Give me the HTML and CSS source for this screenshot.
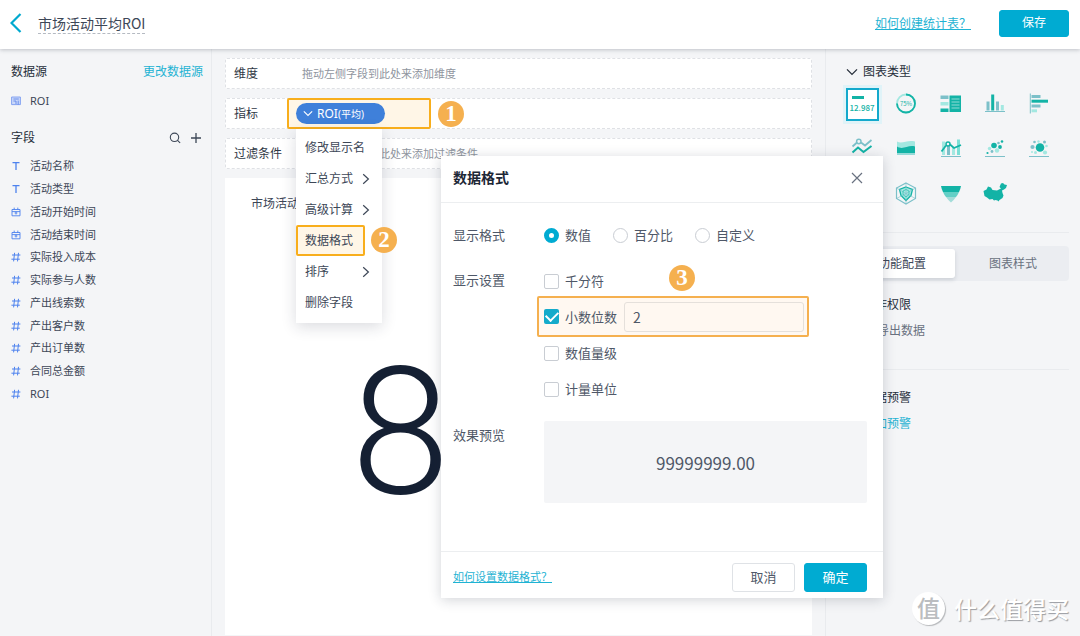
FILE: index.html
```html
<!DOCTYPE html>
<html lang="zh-CN">
<head>
<meta charset="utf-8">
<title>市场活动平均ROI</title>
<link rel="stylesheet" href="styles.css">
</head>
<body>
<svg class="defs" aria-hidden="true">
  <symbol id="i-text" viewBox="0 0 10 10"><path d="M1.5 1.7h7M5 1.7V9" fill="none" stroke="currentColor" stroke-width="1.3"/></symbol>
  <symbol id="i-date" viewBox="0 0 10 10"><path d="M1 2.500h8v6.300H1zM1 4.600h8M3.200 .6v2M6.800 .6v2M5 4.600v2.900M3.600 6h2.800" fill="none" stroke="currentColor" stroke-width=".9"/></symbol>
  <symbol id="i-num" viewBox="0 0 10 10"><path d="M1 3h8.400M.4 7.200h8.400M3.600 .8 2.600 9.400M7.500 .8 6.500 9.400" fill="none" stroke="currentColor" stroke-width="1"/></symbol>
  <symbol id="i-right" viewBox="0 0 8 12"><path d="M1.200 1.200 6.400 6 1.200 10.800" fill="none" stroke="currentColor" stroke-width="1.200"/></symbol>
  <symbol id="i-down" viewBox="0 0 12 8"><path d="M1 1.400 6 6.400l5-5" fill="none" stroke="currentColor" stroke-width="1.300"/></symbol>
</svg>

<header class="topbar">
  <button class="back" aria-label="返回"><svg width="12" height="20" viewBox="0 0 12 20"><path d="M10.500 1 1.500 10l9 9" fill="none" stroke="#00a9cf" stroke-width="2.200"/></svg></button>
  <h1 class="title">市场活动平均ROI</h1>
  <a class="help" href="#">如何创建统计表？</a>
  <button class="btn btn-primary save">保存</button>
</header>

<div class="workspace">
  <aside class="sidebar">
    <div class="side-head"><h2>数据源</h2><a href="#">更改数据源</a></div>
    <div class="field source"><svg class="ico" viewBox="0 0 10 10"><path d="M.6 1h8.800v7.600H.6z" fill="#cbd9fa" stroke="#7b9cf0" stroke-width=".9"/><path d="M2.400 3h5.400M2.400 5h2.600v3M7.200 4.600v4" fill="none" stroke="#5d84ea" stroke-width=".9"/></svg>ROI</div>
    <div class="side-head fields-head"><h2>字段</h2>
      <span class="tools">
        <button aria-label="搜索"><svg width="12" height="12" viewBox="0 0 12 12"><circle cx="5.500" cy="5.300" r="4.200" fill="none" stroke="#3d4757" stroke-width="1.100"/><path d="m8.500 8.300 2.600 2.500" stroke="#3d4757" stroke-width="1.100"/></svg></button>
        <button aria-label="添加"><svg width="12" height="12" viewBox="0 0 12 12"><path d="M6 1v10M1 6h10" stroke="#3d4757" stroke-width="1.300"/></svg></button>
      </span>
    </div>
    <ul class="fields">
      <li class="field"><svg class="ico"><use href="#i-text"/></svg>活动名称</li>
      <li class="field"><svg class="ico"><use href="#i-text"/></svg>活动类型</li>
      <li class="field"><svg class="ico"><use href="#i-date"/></svg>活动开始时间</li>
      <li class="field"><svg class="ico"><use href="#i-date"/></svg>活动结束时间</li>
      <li class="field"><svg class="ico"><use href="#i-num"/></svg>实际投入成本</li>
      <li class="field"><svg class="ico"><use href="#i-num"/></svg>实际参与人数</li>
      <li class="field"><svg class="ico"><use href="#i-num"/></svg>产出线索数</li>
      <li class="field"><svg class="ico"><use href="#i-num"/></svg>产出客户数</li>
      <li class="field"><svg class="ico"><use href="#i-num"/></svg>产出订单数</li>
      <li class="field"><svg class="ico"><use href="#i-num"/></svg>合同总金额</li>
      <li class="field"><svg class="ico"><use href="#i-num"/></svg>ROI</li>
    </ul>
  </aside>

  <main class="canvas">
    <div class="shelf"><span class="shelf-name">维度</span><span class="hint">拖动左侧字段到此处来添加维度</span></div>
    <div class="shelf metric"><span class="shelf-name">指标</span>
      <div class="metric-box">
        <button class="pill"><svg width="10" height="7"><use href="#i-down"/></svg>ROI<small>(平均)</small></button>
        <ul class="menu">
          <li><button>修改显示名</button></li>
          <li><button>汇总方式<svg width="8" height="12"><use href="#i-right"/></svg></button></li>
          <li><button>高级计算<svg width="8" height="12"><use href="#i-right"/></svg></button></li>
          <li class="marked"><button>数据格式</button><span class="badge">2</span></li>
          <li><button>排序<svg width="8" height="12"><use href="#i-right"/></svg></button></li>
          <li><button>删除字段</button></li>
        </ul>
      </div>
      <span class="badge">1</span>
    </div>
    <div class="shelf"><span class="shelf-name">过滤条件</span><span class="hint">拖动左侧字段到此处来添加过滤条件</span></div>
    <section class="chart">
      <h2>市场活动平均ROI</h2>
      <div class="figure">8</div>
    </section>
  </main>

  <aside class="config">
    <h2 class="config-head"><svg width="12" height="8"><use href="#i-down"/></svg>图表类型</h2>
    <div class="types">
      <button class="type active" aria-label="指标卡"><svg viewBox="0 0 33 33"><path d="M6 8h12v3H6z" fill="#13b3a6"/><text x="16" y="23" text-anchor="middle" class="card-num">12.987</text></svg></button>
      <button class="type" aria-label="仪表"><svg viewBox="0 0 33 33"><circle cx="16" cy="15.500" r="9" fill="none" stroke="#a3e8e1" stroke-width="1.800"/><path d="M16 6.500a9 9 0 1 1-9 9" fill="none" stroke="#13b3a6" stroke-width="1.800"/><text x="16" y="18" text-anchor="middle" class="ring-num">75%</text></svg></button>
      <button class="type" aria-label="表格"><svg viewBox="0 0 33 33"><path d="M5.500 7.500h8V11h-8z" fill="#7cc0c9"/><path d="M5.500 14h8v3.500h-8z" fill="#a3e8e1"/><path d="M5.500 20.500h8V24h-8zM14.500 7.500H26V24H14.500z" fill="#13b3a6"/><path d="M16.500 11h8M16.500 14h8M16.500 17h8M16.500 20h8" stroke="#8fdcd5" stroke-width="1.200"/></svg></button>
      <button class="type" aria-label="柱状图"><svg viewBox="0 0 33 33"><path d="M7.500 13.500h3v9h-3zM17 13.500h3v9h-3z" fill="#7cc0c9"/><path d="M12.200 6.500h3v16h-3z" fill="#13b3a6"/><path d="M21.800 17h3v5.500h-3z" fill="#a3e8e1"/><path d="M6 23.500h20" stroke="#7cc0c9"/></svg></button>
      <button class="type" aria-label="条形图"><svg viewBox="0 0 33 33"><path d="M7.300 5.500v20" stroke="#7cc0c9"/><path d="M8.500 7h9v3h-9zM8.500 16.500h9v3h-9z" fill="#7cc0c9"/><path d="M8.500 11.700H25v3H8.500z" fill="#13b3a6"/><path d="M8.500 21.300H14v3H8.500z" fill="#a3e8e1"/></svg></button>
      <button class="type" aria-label="折线图"><svg viewBox="0 0 33 33"><path d="m6.500 13.500 4.500-4M15 9.500l4 3L25.500 7" fill="none" stroke="#7cc0c9" stroke-width="1.800"/><circle cx="12.800" cy="8.500" r="2.200" fill="none" stroke="#7cc0c9" stroke-width="1.500"/><path d="m6.500 19.500 5.500-5 5.500 4.500 8-6" fill="none" stroke="#13b3a6" stroke-width="2"/><path d="M6 23.500h20" stroke="#7cc0c9"/></svg></button>
      <button class="type" aria-label="面积图"><svg viewBox="0 0 33 33"><path d="M7 8.500c5 3 10-2 18 0V22H7z" fill="#a3e8e1"/><path d="M7 13.500c6 4 11-2 18 0V20H7z" fill="#13b3a6"/><path d="M7 21h18" stroke="#7cc0c9" stroke-width=".7"/></svg></button>
      <button class="type" aria-label="组合图"><svg viewBox="0 0 33 33"><path d="M7 8.500h3V22H7zM12 14h3v8h-3zM17 14h3v8h-3z" fill="#a3e8e1"/><path d="M22 6.500h3V22h-3z" fill="#7ddfd6"/><path d="M12 13h3v9h-3z" fill="#7cc0c9"/><path d="m6.500 18.500 4.500-6M15 11.500l4 3.500 7-3" fill="none" stroke="#13b3a6" stroke-width="1.800"/><circle cx="13" cy="11" r="2" fill="none" stroke="#13b3a6" stroke-width="1.500"/><path d="M6 23.500h20" stroke="#7cc0c9"/></svg></button>
      <button class="type" aria-label="散点图"><svg viewBox="0 0 33 33"><g fill="#13b3a6"><circle cx="15" cy="12.500" r="2.800"/><circle cx="21" cy="14" r="1.900"/><circle cx="23" cy="8.500" r="1.300"/><circle cx="8.500" cy="20" r="1.100"/></g><g fill="#a3e8e1"><circle cx="18" cy="17.500" r="2.200"/><circle cx="10.500" cy="15.500" r="1.700"/></g><g fill="#7cc0c9"><circle cx="19.500" cy="10" r="1.300"/><circle cx="13" cy="18.500" r="1.400"/></g><path d="M6 23.500h20" stroke="#7cc0c9"/></svg></button>
      <button class="type" aria-label="气泡图"><svg viewBox="0 0 33 33"><circle cx="17" cy="14.500" r="4.300" fill="#13b3a6"/><g fill="#a3e8e1"><circle cx="15.500" cy="8.500" r="1.200"/><circle cx="12.500" cy="19.500" r="1.500"/><circle cx="9" cy="19" r="1"/><circle cx="22" cy="19.500" r="2.100"/><circle cx="23.500" cy="13" r="1.300"/></g><g fill="#7cc0c9"><circle cx="9.500" cy="14" r="2.100"/><circle cx="11.500" cy="9" r="1.300"/><circle cx="21.500" cy="9" r="1.500"/></g><path d="M6 23.500h20" stroke="#7cc0c9"/></svg></button>
      <button class="type" aria-label="饼图"><svg viewBox="0 0 33 33"><circle cx="16.500" cy="16.500" r="9" fill="#a3e8e1"/><path d="M16.500 16.500v-9a9 9 0 0 1 0 18z" fill="#13b3a6"/></svg></button>
      <button class="type" aria-label="雷达图"><svg viewBox="0 0 33 33"><path d="m16 5 9.500 5v10.500L16 26l-9.500-5.500V10z" fill="none" stroke="#7cc0c9" stroke-width="1.200"/><path d="m16 9 6.500 2.500-1.500 6-5 5-5-5-1.500-6z" fill="#a3e8e1" stroke="#13b3a6" stroke-width="1.300"/><path d="m6.500 10 9.500 5.500 9.500-5.500M16 15.500V26M16 5v10.500M6.500 20.500l9.500-5 9.500 5" fill="none" stroke="#7cc0c9" stroke-width=".6"/><path d="m13 13 3-1.500 3 1.500v3.500L16 19l-3-2.500z" fill="none" stroke="#13b3a6" stroke-width=".6"/></svg></button>
      <button class="type" aria-label="漏斗图"><svg viewBox="0 0 33 33"><path d="M6 8h20q-.5 3-2 6H8Q6.500 11 6 8z" fill="#13b3a6"/><path d="M8 14h16q-1 2.500-3 5H11q-2-2.500-3-5z" fill="#63cfc6"/><path d="M11 19h10q-2 3-5 5.500-3-2.500-5-5.500z" fill="#a3dcd9"/></svg></button>
      <button class="type" aria-label="地图"><svg viewBox="0 0 33 33"><path d="m4.500 13 3-1.500 1.500-3 3 1 1.500 2.500 4.500.5 4-2-1.500-1.500 1.500-3.500 2-.5 1.500 1.500 2.500.5-1 3-2 1.500-2 1 .5 2.500 1 2.500-1 2.500-3 2-1 1.500-1-1-2-.5-1.500.5-1.500-1.500-3 .5-2.500-2-2.500-1.500z" fill="#13b3a6"/></svg></button>
    </div>
    <div class="tabs"><button class="tab active">功能配置</button><button class="tab">图表样式</button></div>
    <section class="block">
      <h3>操作权限</h3>
      <label class="export"><input type="checkbox">导出数据</label>
    </section>
    <section class="block alert">
      <h3>数据预警</h3>
      <a href="#">添加预警</a>
    </section>
  </aside>
</div>

<div class="dialog" role="dialog" aria-labelledby="dlg-title">
  <div class="dialog-head">
    <h2 id="dlg-title">数据格式</h2>
    <button aria-label="关闭"><svg width="12" height="12" viewBox="0 0 12 12"><path d="m1 1 10 10M11 1 1 11" stroke="#697180" stroke-width="1.200"/></svg></button>
  </div>
  <div class="dialog-body">
    <div class="form-row formats">
      <span class="form-name">显示格式</span>
      <div class="radios">
        <label><input type="radio" name="fmt" checked>数值</label>
        <label><input type="radio" name="fmt">百分比</label>
        <label><input type="radio" name="fmt">自定义</label>
      </div>
    </div>
    <div class="form-row settings">
      <span class="form-name">显示设置</span>
      <div class="checks">
        <div class="check-row"><label><input type="checkbox">千分符</label><span class="badge badge-3">3</span></div>
        <div class="check-row picked"><label><input type="checkbox" checked>小数位数</label><input class="digits" type="text" value="2" aria-label="小数位数"></div>
        <div class="check-row"><label><input type="checkbox">数值量级</label></div>
        <div class="check-row"><label><input type="checkbox">计量单位</label></div>
      </div>
    </div>
    <div class="form-row">
      <span class="form-name preview-name">效果预览</span>
      <output class="preview">99999999.00</output>
    </div>
  </div>
  <div class="dialog-foot">
    <a href="#">如何设置数据格式？</a>
    <button class="btn">取消</button>
    <button class="btn btn-primary">确定</button>
  </div>
</div>

<div class="watermark"><span class="mark">值</span>什么值得买</div>
</body>
</html>
```
FILE: styles.css
```css
* { box-sizing: border-box; }
body {
  margin: 0;
  min-height: 100vh;
  display: flex;
  flex-direction: column;
  position: relative;
  overflow: hidden;
  background: #f4f5f7;
  color: #3d4757;
  font: 12px/18px "Noto Sans", "Noto Sans CJK SC", sans-serif;
}
h1, h2, h3, ul { margin: 0; padding: 0; font-weight: 400; font-size: inherit; list-style: none; }
button { font: inherit; color: inherit; background: none; border: 0; padding: 0; white-space: nowrap; }
a { color: #1fb3d3; text-decoration: none; }
svg { display: block; flex: none; }
.defs { position: absolute; width: 0; height: 0; }

.topbar {
  display: flex;
  align-items: center;
  height: 49px;
  padding: 0 11px 3px 10px;
  background: #fff;
  box-shadow: 0 1px 4px rgba(30, 40, 60, .25);
  z-index: 1;
}
.title { margin-left: 16px; font: 14px/20px "Noto Sans CJK SC", sans-serif; border-bottom: 1px dashed #b5bac2; }
.help { margin-left: auto; padding-top: 2px; text-decoration: underline; }
.btn {
  width: 63px;
  height: 29px;
  border: 1px solid #dfe2e6;
  border-radius: 3px;
  background: #fff;
  font-size: 13px;
}
.btn-primary { background: #00abd2; border-color: #00abd2; color: #fff; }
.save { width: 70px; height: 27px; margin-left: 28px; font-size: 12px; }

.workspace { flex: 1; display: flex; }
.sidebar { width: 212px; padding: 14px 8px 0 11px; border-right: 1px solid #e9ebee; }
.side-head { display: flex; justify-content: space-between; align-items: center; }
.side-head h2, .config h2, .config h3 { color: #262e3a; }
.source { margin-top: 8px; }
.fields-head { margin-top: 17px; }
.tools { display: flex; gap: 9px; padding-right: 1px; }
.fields { display: flex; flex-direction: column; height: 250px; margin-top: 8px; }
.fields .field { flex: 1; }
.field { display: flex; align-items: center; gap: 9px; height: 23px; font-size: 11px; }
.ico { width: 10px; height: 10px; color: #4d82ee; }

.canvas { flex: 1; display: flex; flex-direction: column; gap: 9px; padding: 9px 13px 1px; }
.shelf {
  display: flex;
  align-items: center;
  height: 31px;
  padding-left: 8px;
  background: #fff;
  border: 1px dashed #dfe1e5;
  border-radius: 2px;
}
.shelf-name { width: 68px; color: #2f3845; }
.hint { color: #8f959e; font-size: 11px; }
.metric .shelf-name { width: 53px; }
.metric-box {
  position: relative;
  width: 144px;
  height: 31px;
  padding: 3px 7px;
  border: 2px solid #f8ae1c;
  border-radius: 2px;
  background: #fff6e7;
}
.pill {
  display: flex;
  align-items: center;
  width: 89px;
  height: 21px;
  padding-left: 7px;
  border-radius: 11px;
  background: #3f80da;
  color: #fff;
}
.pill svg { margin-right: 4px; }
.pill small { font-size: 10px; }
.badge {
  flex: none;
  width: 26px;
  height: 26px;
  border-radius: 50%;
  background: #f5b04f;
  color: #fff;
  font: 700 23px/26px "Liberation Serif", serif;
  text-align: center;
}
.metric > .badge { margin-left: 7px; }
.menu {
  position: absolute;
  top: 29px;
  left: 7px;
  width: 86px;
  padding: 3px 0 5px;
  background: #fff;
  box-shadow: 0 4px 14px rgba(30, 40, 60, .16);
  z-index: 2;
}
.menu li { position: relative; }
.menu button { display: flex; justify-content: space-between; align-items: center; width: 100%; height: 31px; padding: 0 12px 0 9px; }
.menu .marked button { width: 69px; border: 2px solid #f8ae1c; border-radius: 2px; background: #fff6e7; padding: 0 0 0 7px; }
.menu .badge { position: absolute; left: 75px; top: 2px; }
.chart { flex: 1; padding: 17px 26px; background: #fff; overflow: hidden; }
.figure { margin-top: 119px; padding-left: 100px; font: 350 178px/200px Roboto, sans-serif; color: #152033; }

.config { width: 255px; padding: 14px 11px 0 20px; border-left: 1px solid #e9ebee; }
.config-head { display: flex; align-items: center; gap: 5px; }
.types { display: grid; grid-template-columns: repeat(5, 33px); justify-content: space-between; row-gap: 12px; margin-top: 7px; padding-right: 13px; }
.type { height: 33px; }
.type svg { width: 33px; height: 33px; }
.type.active { background: #fff; box-shadow: inset 0 0 0 2px #14a9cc, 0 0 0 3px #e0f3f8; }
.card-num { font: 500 8px "Noto Sans CJK SC", sans-serif; fill: #13b3a6; }
.ring-num { font: 6px "Noto Sans CJK SC", sans-serif; fill: #13b3a6; }
.tabs { display: grid; grid-template-columns: 1fr 1fr; gap: 5px; margin-top: 35px; padding: 3px; height: 35px; background: #ebedf1; border-radius: 4px; position: relative; }
.tabs::before { content: ""; position: absolute; top: -14px; left: 0; right: 0; border-top: 1px solid #e9ebee; }
.tab { color: #697180; border-radius: 3px; }
.tab.active { background: #fff; color: #3d4757; box-shadow: 0 2px 4px rgba(30, 40, 60, .15); }
.block { padding: 15px 0 29px 17px; }
.block h3 { margin-bottom: 8px; }
.export { display: flex; align-items: center; gap: 4px; color: #697180; }
.export input { width: 10px; height: 10px; margin: 0; }
.alert { padding-top: 19px; border-top: 1px solid #e9ebee; }

.dialog {
  position: absolute;
  top: 156px;
  left: 441px;
  width: 442px;
  background: #fff;
  box-shadow: 0 2px 12px rgba(30, 40, 60, .2);
  font-size: 13px;
  color: #4f5868;
  z-index: 3;
}
.dialog-head { display: flex; justify-content: space-between; align-items: center; height: 47px; padding: 0 20px 2px 12px; border-bottom: 1px solid #eceef0; }
.dialog-head h2 { font-size: 14px; font-weight: 700; color: #1d2736; }
.dialog-body { padding: 23px 16px 48px 12px; }
.form-row { display: flex; }
.form-name { width: 91px; flex: none; }
.settings { margin-top: 19px; }
.settings .form-name { padding-top: 8px; }
.radios { display: flex; gap: 22px; }
.dialog label { display: flex; align-items: center; gap: 6px; }
.dialog label input {
  appearance: none;
  width: 15px;
  height: 15px;
  margin: 0;
  border: 1px solid #c9cdd3;
  border-radius: 2px;
  background: #fff;
}
.dialog label input[type="radio"] { border-radius: 50%; }
.dialog label input[type="radio"]:checked { border: 5px solid #00abd2; }
.dialog label input[type="checkbox"]:checked { border: 0; background: #14abcb; display: grid; place-items: center; }
.dialog label input[type="checkbox"]:checked::before { content: ""; width: 10px; height: 6px; margin-bottom: 3px; border: solid #fff; border-width: 0 0 2px 2px; rotate: -45deg; }
.checks { flex: 1; }
.check-row { display: flex; align-items: center; height: 36px; position: relative; }
.badge-3 { position: absolute; left: 125px; top: 2px; }
.picked { height: 41px; margin: -3px 58px -2px -7px; padding: 0 3px 0 5px; border: 2px solid #f5b04f; border-radius: 2px; background: #fff8f1; }
.digits { flex: 1; min-width: 0; height: 30px; margin-left: 7px; padding: 0 8px; border: 1px solid #e5e0db; border-radius: 3px; background: transparent; font: 14px "Noto Sans CJK SC", sans-serif; color: inherit; }
.preview-name { padding-top: 5px; }
.form-row:last-child { margin-top: 14px; }
.preview { flex: 1; height: 82px; display: grid; place-items: center; background: #f4f5f7; border-radius: 2px; font: 17px "Noto Sans CJK SC", sans-serif; }
.dialog-foot { display: flex; align-items: center; gap: 9px; height: 47px; padding: 4px 16px 0 12px; border-top: 1px solid #eceef0; }
.dialog-foot a { margin-right: auto; font-size: 11px; text-decoration: underline; }

.watermark {
  position: absolute;
  right: 11px;
  bottom: 11px;
  display: flex;
  align-items: center;
  gap: 9px;
  color: #fff;
  font: 500 23px/34px "Noto Sans CJK SC", sans-serif;
  text-shadow: 1px 1px 1px #999ca1;
}
.mark { width: 33px; height: 33px; line-height: 31px; border-radius: 50%; background: #fff; color: #bbbdc0; text-align: center; text-shadow: none; box-shadow: 1px 1px 1px #b5b7ba; }
```
